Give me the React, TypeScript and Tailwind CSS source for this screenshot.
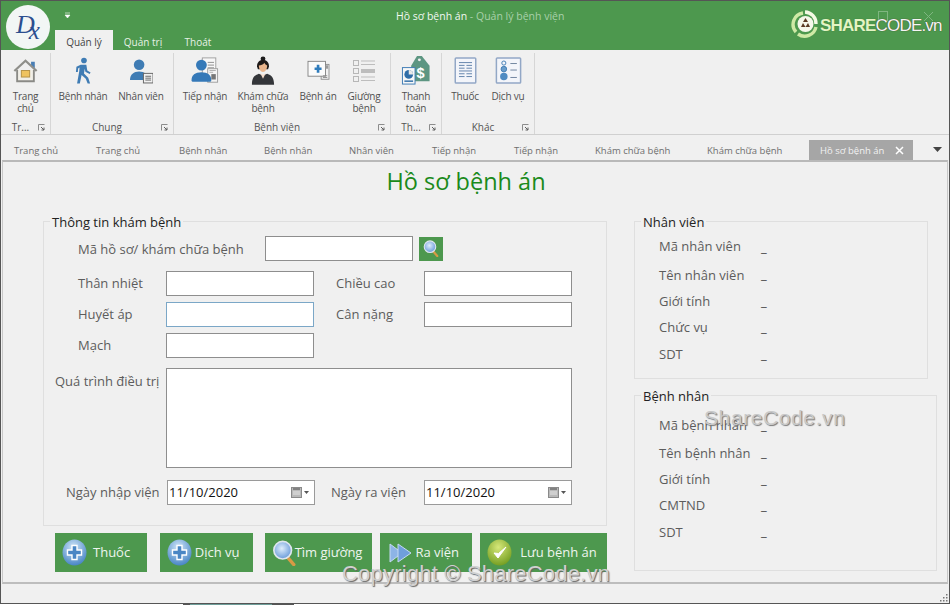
import { ReactNode } from "react";

const FONT = "font-['Open_Sans','Noto_Sans',sans-serif]";

function HomeIcon() {
  return (
    <svg width="27" height="26" viewBox="0 0 28 28">
      <path d="M20 4h4v7l-4-3z" fill="#4a7fb5" />
      <path d="M5 13v12h18V13" fill="#f1efe8" stroke="#8a8a86" strokeWidth="2" />
      <path d="M2 14 14 3l12 11" fill="none" stroke="#8f8f8a" strokeWidth="2.400" />
      <rect x="9.500" y="13.500" width="9" height="7" fill="#efc35f" stroke="#b28f43" />
    </svg>
  );
}

function WalkIcon() {
  return (
    <svg width="17" height="27" viewBox="0 0 18 28" fill="#3f7cb4">
      <circle cx="9.500" cy="3.400" r="3" />
      <path d="M6 8h6l1 6 3.500 2-1 1.700-4.500-2.500-.7-3-.8 5 4.500 4.500 2 6h-2.600l-2-5-4.400-4-1.900 9H2.200l2.300-13 .3-4-1.500 1.200-.300 3.800H1L1.500 10z" />
    </svg>
  );
}

function StaffIcon() {
  return (
    <svg width="23" height="27" viewBox="0 0 24 28">
      <circle cx="9.500" cy="8" r="5.500" fill="#3f7cb4" />
      <path d="M0 24c0-6 4-9 9.500-9S19 18 19 24z" fill="#3f7cb4" />
      <rect x="14" y="17" width="10" height="10" fill="#f1f1f1" stroke="#666" />
      <path d="M16 20h6M16 22h6M16 24h6" stroke="#666" />
    </svg>
  );
}

function ReceiveIcon() {
  return (
    <svg width="28" height="27" viewBox="0 0 30 30">
      <rect x="12" y="1" width="15" height="18" fill="#f7f7f7" stroke="#9a9a9a" />
      <path d="M18 6h7M18 9h7M18 12h7" stroke="#888" />
      <rect x="18" y="13" width="11" height="15" fill="#f4f4f4" stroke="#9a9a9a" />
      <path d="M22 19h5v6h-5z" fill="#777" />
      <path d="M20 15h7M20 17h4" stroke="#aaa" />
      <circle cx="11" cy="9" r="6" fill="#3579b8" />
      <path d="M0 26c0-6 4-9 11-9s11 3 11 9c0 1-1 1.500-2 1.500H2c-1 0-2-.5-2-1.500z" fill="#3579b8" />
    </svg>
  );
}

function DoctorIcon() {
  return (
    <svg width="24" height="30" viewBox="0 0 26 32">
      <circle cx="13" cy="2.800" r="2.600" fill="#1c1c1c" />
      <path d="M6.500 11c0-5 3-7 6.500-7s6.500 2 6.500 7l-1 3H7.500z" fill="#1e1a18" />
      <path d="M8.500 10c2 0 5-1 6-3 .5 1.500 2 2.500 3 3 0 4-2 7-4.500 7s-4.500-3-4.500-7z" fill="#eab58c" />
      <path d="M1 31c0-7 2-10 7.500-12l4.500 2 4.500-2c5.500 2 7.500 5 7.500 12z" fill="#34363a" />
      <path d="M10 18.500l3 6 3-6-3 1.500z" fill="#f4dccb" />
    </svg>
  );
}

function RecordIcon() {
  return (
    <svg width="23" height="21" viewBox="0 0 26 24">
      <rect x="16" y="5" width="9" height="17" fill="#f1f1f1" stroke="#8a8a8a" />
      <rect x="1" y="1.500" width="20" height="17" fill="#fbfbfb" stroke="#7d7d7d" />
      <path d="M8.500 10h8M12.500 5.500v9" stroke="#2f7cbc" strokeWidth="3" />
      <path d="M18 18h5M18 20h5" stroke="#888" />
      <path d="M21 6h3v4h-3z" fill="#9a9a9a" />
    </svg>
  );
}

function BedIcon() {
  return (
    <svg width="22" height="24" viewBox="0 0 22 24" fill="none">
      <rect x=".5" y="1.500" width="5" height="5" stroke="#b7b7b7" />
      <rect x=".5" y="9.500" width="5" height="5" stroke="#b7b7b7" />
      <rect x=".5" y="17.500" width="5" height="5" stroke="#b7b7b7" />
      <path d="M8 2h14M8 5.500h14M8 18h14M8 21.500h14" stroke="#bdbdbd" />
      <rect x="8" y="10" width="14" height="4" fill="#bdbdbd" />
    </svg>
  );
}

function PayIcon() {
  return (
    <svg width="30" height="31" viewBox="0 0 30 32">
      <path d="M16 1h5l8 10v16H10V11z" fill="#5d9682" />
      <circle cx="18.500" cy="5" r="1.500" fill="#f0f0f0" />
      <text x="15.500" y="24" fontSize="15" fontWeight="700" fill="#fff" fontFamily="'Liberation Sans',sans-serif">
        $
      </text>
      <rect x="1" y="13" width="13" height="17" fill="#f7f7f7" stroke="#3f7cb4" />
      <circle cx="7.500" cy="20" r="4.500" fill="#2f6ea8" />
      <path d="M7.500 20v-4.500a4.500 4.500 0 0 1 4.500 4.500z" fill="#e9e9e9" />
      <path d="M3 27h9" stroke="#2f6ea8" strokeWidth="1.500" />
    </svg>
  );
}

function MedicineIcon() {
  return (
    <svg width="23" height="27" viewBox="0 0 24 29" fill="none">
      <rect x="1" y="1" width="22" height="27" rx="1" fill="#f3f5fa" stroke="#92a7c6" strokeWidth="1.600" />
      <path d="M5 6h14M5 9h6M13 9h6M5 12h6M13 12h6M5 15h14M5 18h6M13 18h6M5 21h6M13 21h6" stroke="#5d7fa8" />
    </svg>
  );
}

function ServiceIcon() {
  return (
    <svg width="27" height="27" viewBox="0 0 28 29" fill="none">
      <rect x="1" y="1" width="26" height="27" rx="1" fill="#f3f5fa" stroke="#92a7c6" strokeWidth="1.600" />
      <circle cx="9" cy="6.500" r="2.200" stroke="#3f7cb4" />
      <circle cx="9" cy="13" r="3" fill="#6a9dcb" stroke="#3f7cb4" />
      <circle cx="9" cy="21" r="4" fill="#4f8bc2" />
      <path d="M16 7h7M16 14h7M16 22h7" stroke="#6a7f9b" />
    </svg>
  );
}

function Launcher() {
  return (
    <svg className="absolute right-[5px] top-[3px]" width="7" height="7" viewBox="0 0 7 7" fill="none">
      <path d="M.5 6.500v-6h6" stroke="#8c8c8c" />
      <path d="M3 3l3 3M6 3.500V6H3.500" stroke="#5f5f5f" />
    </svg>
  );
}

function PlusBall({ id }: { id: string }) {
  return (
    <svg width="25" height="27" viewBox="0 0 25 27">
      <defs>
        <radialGradient id={id} cx="45%" cy="30%" r="75%">
          <stop offset="0" stopColor="#d0e6f8" />
          <stop offset="1" stopColor="#3f7fc2" />
        </radialGradient>
      </defs>
      <ellipse cx="12.500" cy="13.500" rx="12" ry="13" fill={`url(#${id})`} />
      <path d="M10 6.500h5v4.500h4.500v5H15v4.500h-5V16H5.500v-5H10z" fill="#4a86c4" stroke="#fff" strokeWidth="1.400" />
    </svg>
  );
}

function LensIcon({ id, size }: { id: string; size: number }) {
  return (
    <svg width={size} height={size} viewBox="0 0 26 28">
      <defs>
        <radialGradient id={id} cx="45%" cy="40%" r="65%">
          <stop offset="0" stopColor="#dfeefc" />
          <stop offset="1" stopColor="#5f93d6" />
        </radialGradient>
      </defs>
      <path d="M16 19l6.500 7.500" stroke="#d79a45" strokeWidth="3.600" strokeLinecap="round" />
      <circle cx="10.500" cy="11" r="9.500" fill={`url(#${id})`} stroke="#dfe6ee" strokeWidth="1.800" />
    </svg>
  );
}

function ArrowsIcon() {
  return (
    <svg width="23" height="20" viewBox="0 0 23 20">
      <path d="M1 1l12 9-12 9z" fill="#8db4e6" stroke="#c5d9f2" />
      <path d="M9 1l13 9-13 9z" fill="#6f9fdc" stroke="#c5d9f2" />
    </svg>
  );
}

function CheckBall() {
  return (
    <svg width="25" height="27" viewBox="0 0 25 27">
      <defs>
        <radialGradient id="checkGrad" cx="45%" cy="30%" r="75%">
          <stop offset="0" stopColor="#d6e87a" />
          <stop offset="1" stopColor="#6f9a1c" />
        </radialGradient>
      </defs>
      <ellipse cx="12.500" cy="13.500" rx="12" ry="13" fill="url(#checkGrad)" />
      <path d="M7 14l4 5 8-11-7.500 6.500z" fill="#fff" stroke="#fff" strokeLinejoin="round" />
    </svg>
  );
}

function CalendarIcon() {
  return (
    <svg width="19" height="11" viewBox="0 0 19 11">
      <rect x=".5" y=".5" width="10" height="10" fill="#b9b9b9" stroke="#8a8a8a" />
      <path d="M2 2h7" stroke="#6f6f6f" strokeWidth="1.500" />
      <path d="M2 5h7M2 7h7" stroke="#e5e5e5" />
      <path d="M13 4h5l-2.500 3z" fill="#555" />
    </svg>
  );
}

function RibbonItem({ w, label, icon }: { w: string; label: ReactNode; icon: ReactNode }) {
  return (
    <div className={`${w} flex flex-col items-center`}>
      <div className="mb-[2px] flex h-[35px] items-center justify-center">{icon}</div>
      <div className="whitespace-nowrap text-center text-[10px] leading-[12px] tracking-[-0.2px] text-[#505050]">
        {label}
      </div>
    </div>
  );
}

function RibbonGroup({ w, label, children }: { w: string; label: string; children: ReactNode }) {
  return (
    <div className={`${w} mt-[3px] flex flex-col border-r border-[#d6d6d6]`}>
      <div className="flex h-[62px] items-start">{children}</div>
      <div className="relative mt-[6px] pr-[10px] text-center text-[10px] leading-[13px] text-[#555]">
        {label}
        <Launcher />
      </div>
    </div>
  );
}

function GroupBox({ box, title, children }: { box: string; title: string; children: ReactNode }) {
  return (
    <div className={`${box} relative border border-[#dfdfdf]`}>
      <div className="absolute -top-[8px] left-[6px] bg-[#f0f0f0] px-[2px] text-[13px] leading-[17px] text-[#222]">
        {title}
      </div>
      {children}
    </div>
  );
}

function TextBox({ box }: { box: string }) {
  return <div className={`${box} border border-[#8e8e8e] bg-white`} />;
}

function FieldLabel({ box, children }: { box: string; children: ReactNode }) {
  return <span className={`${box} whitespace-nowrap`}>{children}</span>;
}

function DateBox() {
  return (
    <div className="flex h-[25px] w-[148px] items-center border border-[#9a9a9a] bg-white pl-[1px] pr-[4px] text-[13px] text-[#111]">
      <span className="flex-1">11/10/2020</span>
      <CalendarIcon />
    </div>
  );
}

function InfoRow({ h, dash, label }: { h: string; dash: string; label: string }) {
  return (
    <div className={`${h} flex items-start text-[13px] leading-[17px] text-[#5c5c5c]`}>
      <span className="w-[102px] whitespace-nowrap">{label}</span>
      <span className={`${dash} text-[#444]`}>_</span>
    </div>
  );
}

function ActionButton({ box, icon, label, pad }: { box: string; icon: ReactNode; label: string; pad: string }) {
  return (
    <button className={`${box} flex h-[39px] items-center bg-[#4d984e] text-[13px] text-[#eef5ee]`}>
      {icon}
      <span className={`${pad} whitespace-nowrap`}>{label}</span>
    </button>
  );
}

const docTabs = [
  { label: "Trang chủ", w: "w-[82px]" },
  { label: "Trang chủ", w: "w-[83px]" },
  { label: "Bệnh nhân", w: "w-[85px]" },
  { label: "Bệnh nhân", w: "w-[85px]" },
  { label: "Nhân viên", w: "w-[83px]" },
  { label: "Tiếp nhận", w: "w-[82px]" },
  { label: "Tiếp nhận", w: "w-[81px]" },
  { label: "Khám chữa bệnh", w: "w-[112px]" },
  { label: "Khám chữa bệnh", w: "w-[102px]" },
];

const staffRows = [
  { label: "Mã nhân viên", h: "h-[29px]", dash: "mt-[1px]" },
  { label: "Tên nhân viên", h: "h-[26px]", dash: "-mt-[1px]" },
  { label: "Giới tính", h: "h-[26px]", dash: "mt-0" },
  { label: "Chức vụ", h: "h-[27px]", dash: "mt-0" },
  { label: "SDT", h: "h-[26px]", dash: "mt-0" },
];

const patientRows = [
  { label: "Mã bệnh nhân", h: "h-[28px]", dash: "mt-0" },
  { label: "Tên bệnh nhân", h: "h-[26px]", dash: "-mt-[1px]" },
  { label: "Giới tính", h: "h-[26px]", dash: "mt-0" },
  { label: "CMTND", h: "h-[27px]", dash: "mt-0" },
  { label: "SDT", h: "h-[26px]", dash: "-mt-[1px]" },
];

export default function App() {
  return (
    <div className={`${FONT} relative h-[605px] w-[950px] overflow-hidden bg-white`}>
      <div className="flex h-[604px] flex-col border border-[#555] bg-[#f0f0f0]">
        {/* title bar */}
        <div className="relative h-[49px] shrink-0 bg-[#4d984e]">
          <div className="absolute left-[5px] top-[4px] flex h-[44px] w-[44px] items-center justify-center rounded-full bg-[#f2f6f5] font-['Liberation_Serif',serif] text-[26px] italic leading-none text-[#2b4f8f]">
            <span className="-mt-[5px]">D</span>
            <span className="-ml-[6px] mt-[7px] text-[25px]">x</span>
          </div>
          <svg className="absolute left-[63px] top-[11px]" width="7" height="7" viewBox="0 0 7 7">
            <path d="M1 1h5M1 3h5L3.500 6z" fill="#fff" stroke="#fff" strokeWidth=".6" />
          </svg>
          <div className="pl-[395px] pt-[8px] text-[10.500px] leading-[14px] text-[#f2f7f2]">
            Hồ sơ bệnh án <span className="text-[#a9d0aa]">- Quản lý bệnh viện</span>
          </div>
          <div className="absolute bottom-0 left-[54px] flex text-[10px] leading-[16px]">
            <div className="w-[58px] bg-[#f0f0f0] pt-[4px] text-center text-[#444]">Quản lý</div>
            <div className="w-[60px] pt-[4px] text-center text-[#e6f1e6]">Quản trị</div>
            <div className="w-[50px] pt-[4px] text-center text-[#e6f1e6]">Thoát</div>
          </div>
          {/* watermark logo + window controls */}
          <div className="absolute left-[877px] top-[10px] h-[10px] w-[10px] border border-[#7fb680]" />
          <svg className="absolute left-[922px] top-[10px]" width="11" height="11" viewBox="0 0 11 11">
            <path d="M1 1l9 9M10 1l-9 9" stroke="#7fb680" />
          </svg>
          <svg className="absolute left-[789px] top-[9px]" width="31" height="28" viewBox="0 0 31 28" fill="none">
            <path d="M6 22A11.500 11.500 0 0 1 13 3" stroke="#cfe9a6" strokeWidth="3.400" />
            <path d="M15 2a11.500 11.500 0 0 1 11 12" stroke="#f4f9e4" strokeWidth="3.400" />
            <path d="M26 17a11.500 11.500 0 0 1-18 7" stroke="#cfe9a6" strokeWidth="3.400" />
            <circle cx="15.500" cy="14" r="8" fill="#f5f7ea" />
            <path d="M15.500 8l2.500 4h-5zM11 17l2-4 2.500 4zM20 17l-2-4-2.500 4z" fill="#5a3a22" />
          </svg>
          <div className="absolute left-[819px] top-[14px] flex font-['Liberation_Sans',sans-serif] text-[17px] font-bold leading-[22px] tracking-[-0.8px]">
            <span className="text-[#e4f4c4] [text-shadow:0_0_1px_#2f6d30]">SHARE</span>
            <span className="font-normal text-[#f5f5f5] [text-shadow:0_0_1px_#3c2a1a]">CODE.vn</span>
          </div>
        </div>

        {/* ribbon */}
        <div className="flex h-[85px] shrink-0 border-b border-[#d0d0d0]">
          <RibbonGroup w="w-[50px]" label="Tr...">
            <RibbonItem
              w="w-[49px]"
              icon={<HomeIcon />}
              label={
                <>
                  Trang
                  <br />
                  chủ
                </>
              }
            />
          </RibbonGroup>
          <RibbonGroup w="w-[123px]" label="Chung">
            <RibbonItem w="w-[64px]" icon={<WalkIcon />} label="Bệnh nhân" />
            <RibbonItem w="w-[52px]" icon={<StaffIcon />} label="Nhân viên" />
          </RibbonGroup>
          <RibbonGroup w="w-[217px]" label="Bệnh viện">
            <RibbonItem w="w-[62px]" icon={<ReceiveIcon />} label="Tiếp nhận" />
            <RibbonItem
              w="w-[54px]"
              icon={<DoctorIcon />}
              label={
                <>
                  Khám chữa
                  <br />
                  bệnh
                </>
              }
            />
            <RibbonItem w="w-[56px]" icon={<RecordIcon />} label="Bệnh án" />
            <RibbonItem
              w="w-[36px]"
              icon={<BedIcon />}
              label={
                <>
                  Giường
                  <br />
                  bệnh
                </>
              }
            />
          </RibbonGroup>
          <RibbonGroup w="w-[51px]" label="Th...">
            <RibbonItem
              w="w-[50px]"
              icon={<PayIcon />}
              label={
                <>
                  Thanh
                  <br />
                  toán
                </>
              }
            />
          </RibbonGroup>
          <RibbonGroup w="w-[93px]" label="Khác">
            <RibbonItem w="w-[46px]" icon={<MedicineIcon />} label="Thuốc" />
            <RibbonItem w="w-[40px]" icon={<ServiceIcon />} label="Dịch vụ" />
          </RibbonGroup>
        </div>

        {/* document tabs */}
        <div className="flex h-[25px] shrink-0 items-end pl-[13px] text-[9.500px] leading-[18px] text-[#6e6e6e]">
          {docTabs.map((t, i) => (
            <div key={i} className={`${t.w} shrink-0 whitespace-nowrap`}>
              {t.label}
            </div>
          ))}
          <div className="flex h-[20px] w-[104px] shrink-0 items-center bg-[#a6a6a6] pl-[11px] pt-[1px] text-[#f2f2f2]">
            <span className="w-[75px] whitespace-nowrap">Hồ sơ bệnh án</span>
            <svg width="9" height="9" viewBox="0 0 9 9">
              <path d="M1 1l7 7M8 1L1 8" stroke="#fff" strokeWidth="1.500" />
            </svg>
          </div>
          <svg className="mb-[7px] ml-[20px]" width="9" height="6" viewBox="0 0 9 6">
            <path d="M0 0h9L4.500 5z" fill="#444" />
          </svg>
        </div>

        {/* content panel */}
        <div className="mx-[1px] flex-1 border-x border-y-2 border-x-[#c8c8c8] border-b-[#bdbdbd] border-t-[#b9b9b9]">
          <div className="h-[59px] pr-[18px] pt-[4px] text-center text-[23.500px] leading-[30px] text-[#1b8a1b]">
            Hồ sơ bệnh án
          </div>
          <div className="flex pl-[40px]">
            <div className="w-[564px]">
              <GroupBox box="h-[305px] w-[564px]" title="Thông tin khám bệnh">
                <div className="flex flex-col pt-[14px] text-[13px] text-[#5c5c5c]">
                  <div className="flex h-[25px] items-center pl-[34px]">
                    <FieldLabel box="w-[187px] pt-[2px]">Mã hồ sơ/ khám chữa bệnh</FieldLabel>
                    <TextBox box="h-[25px] w-[148px]" />
                    <div className="ml-[6px] flex h-[24px] w-[24px] items-center justify-center bg-[#4d984e]">
                      <LensIcon id="lensSmall" size={17} />
                    </div>
                  </div>
                  <div className="mt-[10px] flex h-[25px] items-center pl-[34px]">
                    <FieldLabel box="w-[88px]">Thân nhiệt</FieldLabel>
                    <TextBox box="h-[25px] w-[148px]" />
                    <FieldLabel box="ml-[22px] w-[88px]">Chiều cao</FieldLabel>
                    <TextBox box="h-[25px] w-[148px]" />
                  </div>
                  <div className="mt-[6px] flex h-[25px] items-center pl-[34px]">
                    <FieldLabel box="w-[88px]">Huyết áp</FieldLabel>
                    <div className="h-[25px] w-[148px] border border-[#7ba7c7] bg-white" />
                    <FieldLabel box="ml-[22px] w-[88px]">Cân nặng</FieldLabel>
                    <TextBox box="h-[25px] w-[148px]" />
                  </div>
                  <div className="mt-[6px] flex h-[25px] items-center pl-[34px]">
                    <FieldLabel box="w-[88px]">Mạch</FieldLabel>
                    <TextBox box="h-[25px] w-[148px]" />
                  </div>
                  <div className="mt-[10px] flex h-[100px] pl-[11px]">
                    <FieldLabel box="mt-[4px] w-[111px]">Quá trình điều trị</FieldLabel>
                    <TextBox box="h-[100px] w-[406px]" />
                  </div>
                  <div className="mt-[12px] flex h-[25px] items-center pl-[22px]">
                    <span className="w-[101px] whitespace-nowrap">Ngày nhập viện</span>
                    <DateBox />
                    <span className="ml-[16px] w-[93px] whitespace-nowrap">Ngày ra viện</span>
                    <DateBox />
                  </div>
                </div>
              </GroupBox>
              <div className="mt-[7px] flex pl-[12px]">
                <ActionButton box="w-[92px] pl-[7px]" icon={<PlusBall id="plusA" />} label="Thuốc" pad="ml-[6px]" />
                <ActionButton
                  box="ml-[13px] w-[93px] pl-[7px]"
                  icon={<PlusBall id="plusB" />}
                  label="Dịch vụ"
                  pad="ml-[3px]"
                />
                <ActionButton
                  box="ml-[12px] w-[108px] pl-[7px]"
                  icon={<LensIcon id="lensBig" size={26} />}
                  label="Tìm giường"
                  pad="-ml-[3px]"
                />
                <ActionButton box="ml-[8px] w-[92px] pl-[9px]" icon={<ArrowsIcon />} label="Ra viện" pad="ml-[3px]" />
                <ActionButton box="ml-[8px] w-[127px] pl-[7px]" icon={<CheckBall />} label="Lưu bệnh án" pad="ml-[8px]" />
              </div>
            </div>
            <div className="ml-[27px] flex flex-col">
              <GroupBox box="h-[158px] w-[294px]" title="Nhân viên">
                <div className="pl-[24px] pt-[16px]">
                  {staffRows.map((r) => (
                    <InfoRow key={r.label} {...r} />
                  ))}
                </div>
              </GroupBox>
              <GroupBox box="mt-[16px] h-[176px] w-[303px]" title="Bệnh nhân">
                <div className="pl-[24px] pt-[21px]">
                  {patientRows.map((r) => (
                    <InfoRow key={r.label} {...r} />
                  ))}
                </div>
              </GroupBox>
            </div>
          </div>
        </div>

        {/* status bar */}
        <div className="relative h-[19px] shrink-0">
          <svg className="absolute bottom-[1px] right-[1px]" width="8" height="8" viewBox="0 0 8 8" fill="#777">
            <rect x="6" y="0" width="1.500" height="1.500" />
            <rect x="3" y="3" width="1.500" height="1.500" />
            <rect x="6" y="3" width="1.500" height="1.500" />
            <rect x="0" y="6" width="1.500" height="1.500" />
            <rect x="3" y="6" width="1.500" height="1.500" />
            <rect x="6" y="6" width="1.500" height="1.500" />
          </svg>
        </div>
      </div>

      {/* bits of the desktop below the window */}
      <div className="flex h-px pl-[183px]">
        <div className="w-[7px] bg-[#555]" />
        <div className="w-[82px] bg-[#6f9f9a]" />
        <div className="w-[22px] bg-[#555]" />
      </div>

      {/* ShareCode watermarks */}
      <div className="absolute left-[704px] top-[405px] font-['Liberation_Sans',sans-serif] text-[21px] leading-[26px] tracking-[0.6px] text-[#c9c9c9] [text-shadow:1px_1px_1px_#777]">
        ShareCode.vn
      </div>
      <div className="absolute left-[342px] top-[561px] font-['Liberation_Sans',sans-serif] text-[22px] leading-[26px] tracking-[0.2px] text-[#d0d0d0] [text-shadow:1px_1px_1px_#666]">
        Copyright © ShareCode.vn
      </div>
    </div>
  );
}
